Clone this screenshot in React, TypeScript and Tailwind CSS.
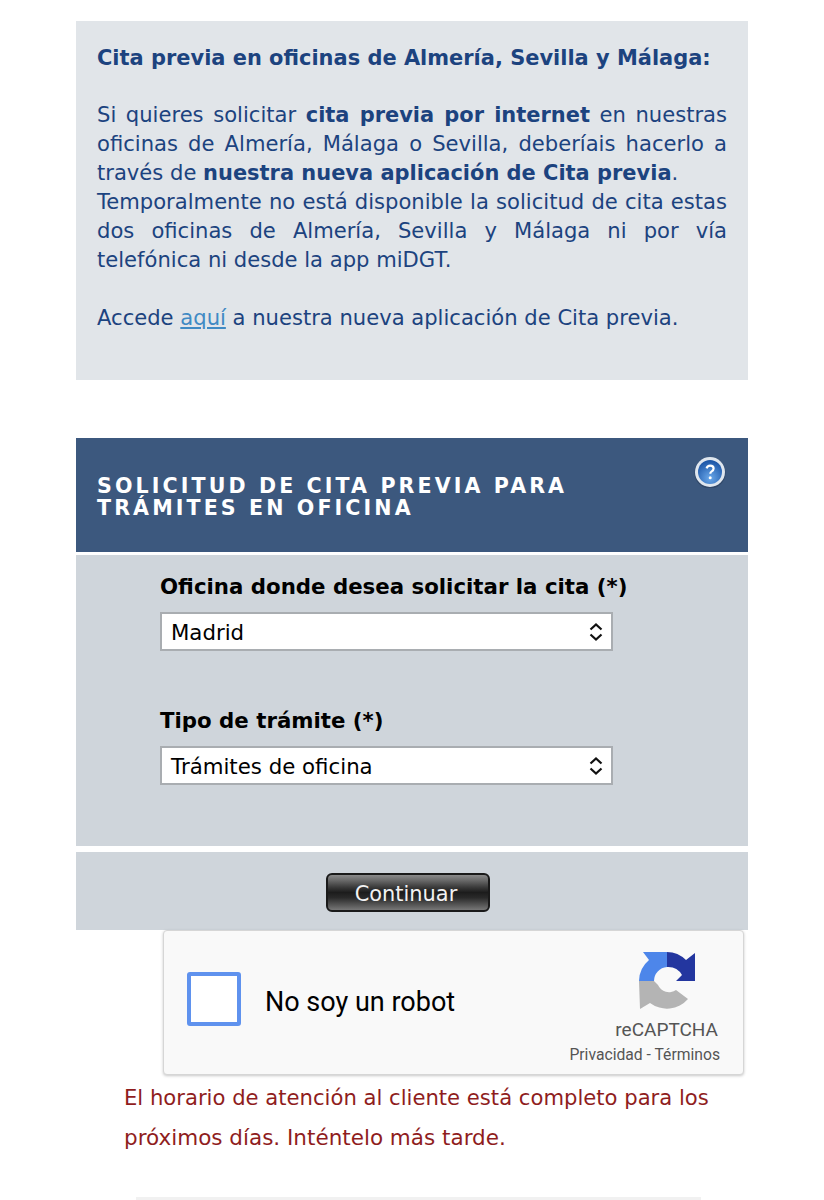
const sans = "font-['DejaVu_Sans',Verdana,sans-serif]";

function HelpIcon() {
  return (
    <svg width="32" height="32" viewBox="0 0 32 32" className="absolute left-[618px] top-[18px]">
      <defs>
        <radialGradient id="helpBlue" cx="50%" cy="75%" r="70%">
          <stop offset="0%" stopColor="#6aa8ea" />
          <stop offset="100%" stopColor="#1d57a8" />
        </radialGradient>
      </defs>
      <circle cx="16" cy="17" r="15.5" fill="#1f2f49" opacity="0.4" />
      <circle cx="16" cy="16" r="15" fill="#dfe6ee" />
      <circle cx="16" cy="16" r="12" fill="url(#helpBlue)" />
      <path d="M12.6 12.4c.5-1.9 1.8-2.7 3.5-2.7 2 0 3.5 1.1 3.5 2.9 0 1.4-.8 2.1-1.9 2.8-1 .6-1.4 1.1-1.4 2.3" fill="none" stroke="#fff" strokeWidth="2.2" />
      <circle cx="16.2" cy="21.8" r="1.5" fill="#fff" />
    </svg>
  );
}

function RecaptchaLogo() {
  return (
    <svg width="57" height="58" viewBox="0 0 57 58">
      <path d="M4 0 L28 0 L28 15 A14 14 0 0 0 15 29 L0 29 A28 28 0 0 1 10 8 Z" fill="#4d86ea" />
      <path d="M28 0 A28 28 0 0 1 47 8 L56 1 L56 29 L37 29 L43 23 A16 16 0 0 0 28 15 Z" fill="#23369f" />
      <path d="M0 29 L15 29 L19 33 A12 12 0 0 0 37 38 L49 47 A28 28 0 0 1 11 51 L1 57 Z" fill="#b4b4b4" />
    </svg>
  );
}

function FakeSelect({ value }: { value: string }) {
  return (
    <div className="flex h-[39px] w-[453px] items-center justify-between border-2 border-[#a9adb1] bg-white pl-[9px] pr-[7px] pt-[2px] text-[21.3px] text-black">
      <span>{value}</span>
      <svg width="16" height="22" viewBox="0 0 16 22" fill="none" stroke="#111" strokeWidth="2.2" className="-mt-[2px]">
        <path d="M2.5 8.5 8 3.5l5.5 5" />
        <path d="M2.5 13.5 8 18.5l5.5-5" />
      </svg>
    </div>
  );
}

export default function App() {
  return (
    <div className={`${sans} h-[1200px] w-[824px] overflow-hidden bg-white`}>
      <div className="ml-[76px] w-[672px] pt-[21px]">
        <div className="h-[359px] bg-[#e1e5e9] px-[21px] pt-[23px] text-[21.1px] leading-[29px] text-[#1c437f]">
          <p className="text-[20.95px] font-bold">Cita previa en oficinas de Almería, Sevilla y Málaga:</p>
          <div className="mt-[27px] text-justify">
            <p>
              Si quieres solicitar <b className="text-[20.95px] leading-none">cita previa por internet</b> en nuestras oficinas de Almería, Málaga o Sevilla, deberíais hacerlo a través de <b className="text-[20.95px] leading-none">nuestra nueva aplicación de Cita previa</b>.
            </p>
            <p>
              Temporalmente no está disponible la solicitud de cita estas dos oficinas de Almería, Sevilla y Málaga ni por vía telefónica ni desde la app miDGT.
            </p>
          </div>
          <p className="mt-[29px]">
            Accede <span className="text-[#3f8ac4] underline">aquí</span> a nuestra nueva aplicación de Cita previa.
          </p>
        </div>

        <div className="relative mt-[58px] h-[114px] bg-[#3c587e] pl-[21px] pt-[37px] text-[20.6px] font-bold leading-[22px] tracking-[3.1px] text-white">
          <div>SOLICITUD DE CITA PREVIA PARA</div>
          <div>TRÁMITES EN OFICINA</div>
          <HelpIcon />
        </div>

        <div className="mt-[3px] h-[291px] bg-[#cfd5db] pl-[84px] pt-[17px]">
          <div className="text-[21.3px] font-bold leading-[29px] text-black">Oficina donde desea solicitar la cita (*)</div>
          <div className="mt-[11px]"><FakeSelect value="Madrid" /></div>
          <div className="mt-[55px] text-[21.3px] font-bold leading-[29px] text-black">Tipo de trámite (*)</div>
          <div className="mt-[11px]"><FakeSelect value="Trámites de oficina" /></div>
        </div>

        <div className="mt-[6px] flex h-[78px] justify-start bg-[#cfd5db] pl-[250px] pt-[21px]">
          <button className="h-[39px] w-[164px] rounded-[6px] border-2 border-[#1a1a1a] bg-[linear-gradient(#8a8a8a_0%,#6a6a6a_15%,#3a3a3a_35%,#1c1c1c_50%,#2a2a2a_65%,#5c5c5c_88%,#777_100%)] pr-[4px] pt-[2px] text-[20.9px] leading-[34px] text-[#f2f2f2]">
            Continuar
          </button>
        </div>

        <div className="ml-[87px] flex h-[145px] w-[581px] items-center rounded-[4px] border border-[#d6d6d6] bg-[#f9f9f9] pl-[23px] pr-[23px] shadow-[0_1px_3px_rgba(0,0,0,0.22)]">
          <div className="-mt-[8px] h-[54px] w-[54px] rounded-[3px] border-[4px] border-[#5f92ee] bg-white" />
          <span className="ml-[24px] font-['Roboto',sans-serif] text-[27px] text-black">No soy un robot</span>
          <div className="ml-auto flex flex-col items-end pt-[11px] font-['Roboto',sans-serif]">
            <div className="mr-[24px]"><RecaptchaLogo /></div>
            <div className="mr-[2px] mt-[8px] text-[19px] leading-[24px] text-[#555]">reCAPTCHA</div>
            <div className="mt-[3px] text-[15.7px] leading-[20px] text-[#555]">Privacidad - Términos</div>
          </div>
        </div>

        <div className="ml-[48px] mt-[3px] w-[600px] leading-[40px] text-[#8f1d1d]">
          <div className="text-[21.15px]">El horario de atención al cliente está completo para los</div>
          <div className="text-[21.5px]">próximos días. Inténtelo más tarde.</div>
        </div>

        <div className="ml-[60px] mt-[39px] h-[4px] w-[565px] bg-[#f1f1f1]" />
      </div>
    </div>
  );
}
